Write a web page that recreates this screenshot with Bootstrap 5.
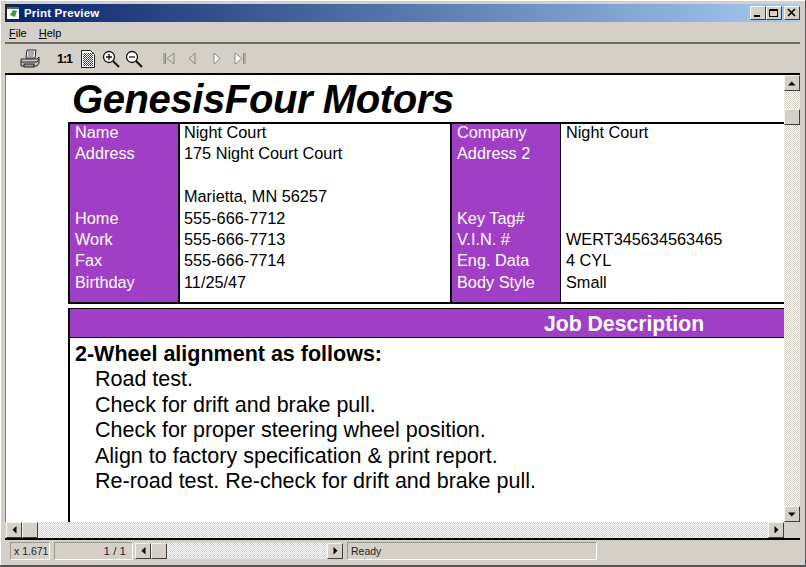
<!DOCTYPE html>
<html lang="en"><head><meta charset="utf-8"><title>Print Preview</title>
<link href="https://cdn.jsdelivr.net/npm/bootstrap@5.3.0/dist/css/bootstrap.min.css" rel="stylesheet">
<style>
html,body{margin:0;height:100%;overflow:hidden;background:#d4d0c8}
body{font-family:"Liberation Sans",Arial,sans-serif;color:#000}
.win{width:806px;height:567px;padding:4px 5px 0 5px;border-right:1px solid #555;border-bottom:2px solid #555;box-shadow:inset 1px 1px 0 #fff}
.win>*{flex:none}
.ttl{height:18px;background:linear-gradient(90deg,#0a246a,#a6caf0);color:#fff;font:bold 11.5px/18px "Liberation Sans",sans-serif;letter-spacing:.2px;padding:0 0 0 1px}
.cap{width:16px;height:14px;background:#d4d0c8;border:1px solid;border-color:#fff #404040 #404040 #fff;display:flex;align-items:center;justify-content:center}
.menubar{height:22px;font:11px "Liberation Sans",sans-serif;gap:12px;padding:2px 0 0 4px;align-items:center;border-bottom:2px solid #6e6c66}
.tools{height:31px;padding-left:14px;border-bottom:2px solid #000;align-items:center}
.one{font:bold 12.5px "Liberation Sans",sans-serif;letter-spacing:-1px;width:18px;margin-left:16px}
.view{height:447px}
.sheet{flex:1 1 0;min-width:0;background:#fff;overflow:hidden;padding-left:62px;border-left:1px solid #808080}
.brand{font:italic bold 40px/46px "Liberation Sans",sans-serif;margin:1px 0 0 4px;letter-spacing:-.4px;white-space:nowrap;height:46px}
.card-sheet{width:760px}
.info{border:2px solid #000;border-right:0;height:182px;display:flex;font-size:16.3px;line-height:21.4px}
.lab,.val{white-space:nowrap}
.lab::before,.val::before{content:"";display:block;margin-top:-2px}
.lab{background:#a03fc6;color:#fff;padding-left:5px}
.c1{width:108px}.c2{width:274px;padding-left:4px;border-left:2px solid #000;border-right:2px solid #000}.c3{width:108px}.c4{padding-left:5px;border-left:1px solid #000;flex:1}
.job{border-left:2px solid #000;margin-top:4px;height:230px}
.jobhead{height:30px;background:#a03fc6;color:#fff;font:bold 21.2px/29px "Liberation Sans",sans-serif;border-top:1px solid #000;border-bottom:1px solid #000;padding-left:474px}
.jobtext{font-size:21.5px;line-height:25.4px;padding:4px 0 0 5px;white-space:nowrap}
.jobtext div+div{padding-left:20px}
.vsc{width:16px;background:repeating-conic-gradient(#d4d0c8 0 25%,#fff 0 50%) 0 0/2px 2px}
.hsc{background:repeating-conic-gradient(#d4d0c8 0 25%,#fff 0 50%) 0 0/2px 2px}
.sbtn{width:16px;height:16px;flex:none;background:#d4d0c8;border:1px solid;border-color:#f4f3ef #404040 #404040 #f4f3ef;display:flex;align-items:center;justify-content:center}
.htrack{height:16px;flex:1;margin-left:1px}
.corner{width:16px;height:16px;background:#d4d0c8}
.stat{height:22px;border-top:2px solid #000;padding-top:2px;font:10.5px/17px "Liberation Sans",sans-serif;color:#222}
.pane{height:18px;border:1px solid;border-color:#9a9890 #fff #fff #9a9890;padding:0 3px;white-space:nowrap}
</style></head><body>
<div class="win d-flex flex-column">
 <div class="ttl d-flex align-items-center">
  <svg width="15" height="14" viewBox="0 0 15 14" style="margin-right:3px"><rect x=".5" y=".5" width="13" height="13" fill="#fff" stroke="#222"/><rect x="1" y="1" width="12" height="2" fill="#3a6ea5"/><path d="M4 9l3-5 4 1-2 6z" fill="#3a9a3a"/></svg>
  <span class="flex-grow-1">Print Preview</span>
  <div class="d-flex">
   <span class="cap"><svg width="10" height="10"><rect x="1" y="7" width="6" height="2" fill="#000"/></svg></span>
   <span class="cap"><svg width="10" height="10"><rect x=".5" y="1.5" width="8" height="7" fill="none" stroke="#000"/><rect x="1" y="1" width="8" height="2" fill="#000"/></svg></span>
   <span class="cap" style="margin-left:2px"><svg width="10" height="10"><path d="M1 1l7 7M8 1l-7 7" stroke="#000" stroke-width="1.600"/></svg></span>
  </div>
 </div>
 <nav class="menubar d-flex"><span><u>F</u>ile</span><span><u>H</u>elp</span></nav>
 <div class="tools d-flex">
  <svg width="22" height="20" viewBox="0 0 22 20"><path d="M8 1h9l-1 8H7z" fill="#fff" stroke="#222"/><path d="M9 3h6M9 5h6M8.500 7h6" stroke="#555"/><path d="M2 10h16l2-2v6l-2 3H2z" fill="#c8c6c0" stroke="#222"/><path d="M2 13h16M18 13l2-3" stroke="#222"/><rect x="5" y="15" width="10" height="3" fill="#999" stroke="#222"/></svg>
  <span class="one">1:1</span>
  <svg width="16" height="20" viewBox="0 0 16 20" style="margin-left:5px"><defs><pattern id="dt" width="2" height="2" patternUnits="userSpaceOnUse"><rect width="1" height="1" fill="#333"/><rect x="1" y="1" width="1" height="1" fill="#555"/></pattern></defs><path d="M1.500 1.500h9l4 4v13h-13z" fill="#fff" stroke="#222"/><rect x="3" y="4" width="10" height="13" fill="url(#dt)"/></svg>
  <svg width="18" height="20" viewBox="0 0 18 20" style="margin-left:6px"><circle cx="7" cy="8" r="5.500" fill="#fff" stroke="#111" stroke-width="1.300"/><path d="M4 8h6M7 5v6" stroke="#111" stroke-width="1.300"/><path d="M11 12l6 6" stroke="#111" stroke-width="2"/></svg>
  <svg width="18" height="20" viewBox="0 0 18 20" style="margin-left:5px"><circle cx="7" cy="8" r="5.500" fill="#fff" stroke="#111" stroke-width="1.300"/><path d="M4 8h6" stroke="#111" stroke-width="1.300"/><path d="M11 12l6 6" stroke="#111" stroke-width="2"/></svg>
  <svg width="14" height="16" viewBox="0 0 14 16" style="margin-left:19px"><path d="M2 2v11M3.500 2v11" stroke="#8a8880"/><path d="M12 2v11L5 7.500z" fill="#d4d0c8" stroke="#8a8880"/></svg>
  <svg width="10" height="16" viewBox="0 0 10 16" style="margin-left:11px"><path d="M8 2v11L2 7.500z" fill="#d4d0c8" stroke="#8a8880"/></svg>
  <svg width="10" height="16" viewBox="0 0 10 16" style="margin-left:15px"><path d="M2 2v11l6-5.500z" fill="#fff" stroke="#8a8880"/></svg>
  <svg width="14" height="16" viewBox="0 0 14 16" style="margin-left:11px"><path d="M2 2v11l7-5.500z" fill="#fff" stroke="#8a8880"/><path d="M10.500 2v11M12 2v11" stroke="#8a8880"/></svg>
 </div>
 <div class="view d-flex">
  <div class="sheet"><div class="card-sheet">
   <div class="brand">GenesisFour Motors</div>
   <div class="info">
    <div class="lab c1">Name<br>Address<br><br><br>Home<br>Work<br>Fax<br>Birthday</div>
    <div class="val c2">Night Court<br>175 Night Court Court<br><br>Marietta, MN 56257<br>555-666-7712<br>555-666-7713<br>555-666-7714<br>11/25/47</div>
    <div class="lab c3">Company<br>Address 2<br><br><br>Key Tag#<br>V.I.N. #<br>Eng. Data<br>Body Style</div>
    <div class="val c4">Night Court<br><br><br><br><br>WERT345634563465<br>4 CYL<br>Small</div>
   </div>
   <div class="job">
    <div class="jobhead">Job Description</div>
    <div class="jobtext"><div class="fw-bold">2-Wheel alignment as follows:</div><div>Road test.</div><div>Check for drift and brake pull.</div><div>Check for proper steering wheel position.</div><div>Align to factory specification &amp; print report.</div><div>Re-road test. Re-check for drift and brake pull.</div></div>
   </div>
  </div></div>
  <div class="vsc d-flex flex-column">
   <span class="sbtn"><svg width="8" height="5"><path d="M0 4.500h7.500L3.750 .5z"/></svg></span>
   <span class="flex-grow-1 d-flex flex-column"><span class="sbtn" style="margin-top:18px"></span></span>
   <span class="sbtn"><svg width="8" height="5"><path d="M0 .5h7.500L3.750 4.500z"/></svg></span>
  </div>
 </div>
 <div class="d-flex">
  <div class="hsc d-flex htrack">
   <span class="sbtn"><svg width="5" height="8"><path d="M4.500 0v7.500L.5 3.750z"/></svg></span>
   <span class="sbtn"></span>
   <span class="flex-grow-1"></span>
   <span class="sbtn"><svg width="5" height="8"><path d="M.5 0v7.500L4.500 3.750z"/></svg></span>
  </div>
  <span class="corner"></span>
 </div>
 <div class="stat d-flex">
  <div class="pane" style="width:40px;margin-left:5px">x 1.671</div>
  <div class="pane text-end" style="width:79px;margin-left:4px;padding-right:6px;font-size:11.5px">1 / 1</div>
  <div class="hsc d-flex" style="width:208px;height:16px;margin:1px 0 0 2px">
   <span class="sbtn"><svg width="5" height="8"><path d="M4.500 0v7.500L.5 3.750z"/></svg></span>
   <span class="sbtn"></span><span class="flex-grow-1"></span>
   <span class="sbtn"><svg width="5" height="8"><path d="M.5 0v7.500L4.500 3.750z"/></svg></span>
  </div>
  <div class="pane" style="width:250px;margin-left:4px">Ready</div>
 </div>
</div>
</body></html>
